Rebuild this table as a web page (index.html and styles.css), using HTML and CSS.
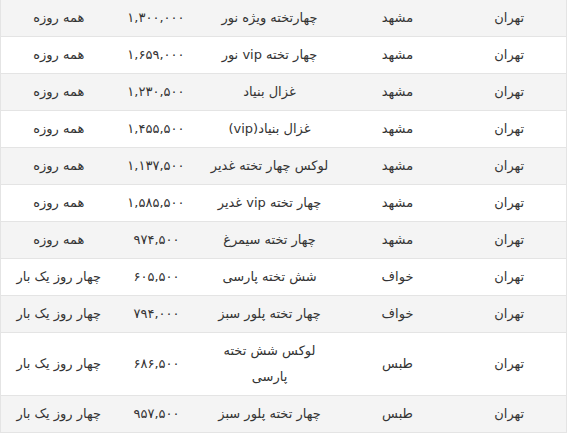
FILE: index.html
```html
<!DOCTYPE html>
<html lang="fa" dir="rtl">
<head>
<meta charset="utf-8">
<link rel="stylesheet" href="styles.css">
</head>
<body>
<table class="tbl">
  <colgroup>
    <col class="c1"><col class="c2"><col class="c3"><col class="c4"><col class="c5">
  </colgroup>
  <tbody>
    <tr><td>تهران</td><td>مشهد</td><td>چهارتخته ویژه نور</td><td>۱,۳۰۰,۰۰۰</td><td>همه روزه</td></tr>
    <tr><td>تهران</td><td>مشهد</td><td>چهار تخته vip نور</td><td>۱,۶۵۹,۰۰۰</td><td>همه روزه</td></tr>
    <tr><td>تهران</td><td>مشهد</td><td>غزال بنیاد</td><td>۱,۲۳۰,۵۰۰</td><td>همه روزه</td></tr>
    <tr><td>تهران</td><td>مشهد</td><td>غزال بنیاد(vip)</td><td>۱,۴۵۵,۵۰۰</td><td>همه روزه</td></tr>
    <tr><td>تهران</td><td>مشهد</td><td>لوکس چهار تخته غدیر</td><td>۱,۱۳۷,۵۰۰</td><td>همه روزه</td></tr>
    <tr><td>تهران</td><td>مشهد</td><td>چهار تخته vip غدیر</td><td>۱,۵۸۵,۵۰۰</td><td>همه روزه</td></tr>
    <tr><td>تهران</td><td>مشهد</td><td>چهار تخته سیمرغ</td><td>۹۷۴,۵۰۰</td><td>همه روزه</td></tr>
    <tr><td>تهران</td><td>خواف</td><td>شش تخته پارسی</td><td>۶۰۵,۵۰۰</td><td>چهار روز یک بار</td></tr>
    <tr><td>تهران</td><td>خواف</td><td>چهار تخته پلور سبز</td><td>۷۹۴,۰۰۰</td><td>چهار روز یک بار</td></tr>
    <tr><td>تهران</td><td>طبس</td><td>لوکس شش تخته پارسی</td><td>۶۸۶,۵۰۰</td><td>چهار روز یک بار</td></tr>
    <tr><td>تهران</td><td>طبس</td><td>چهار تخته پلور سبز</td><td>۹۵۷,۵۰۰</td><td>چهار روز یک بار</td></tr>
  </tbody>
</table>
</body>
</html>
```

FILE: styles.css
```css
html, body {
  margin: 0;
  padding: 0;
  background: #ffffff;
}
body {
  font-family: "DejaVu Sans", sans-serif;
  font-size: 13px;
  color: #333333;
}
.tbl {
  width: 566px;
  border-collapse: collapse;
  table-layout: fixed;
  border-left: 1px solid #e4e4e4;
  border-right: 1px solid #e4e4e4;
}
.c1 { width: 114px; }
.c2 { width: 110px; }
.c3 { width: 146px; }
.c4 { width: 80px; }
.c5 { width: 116px; }
.tbl td {
  text-align: center;
  vertical-align: middle;
  padding: 5px 12px;
  line-height: 26px;
  border-bottom: 1px solid #e4e4e4;
  white-space: normal;
}
.tbl tr:nth-child(odd) td {
  background: #f4f4f4;
}
```
